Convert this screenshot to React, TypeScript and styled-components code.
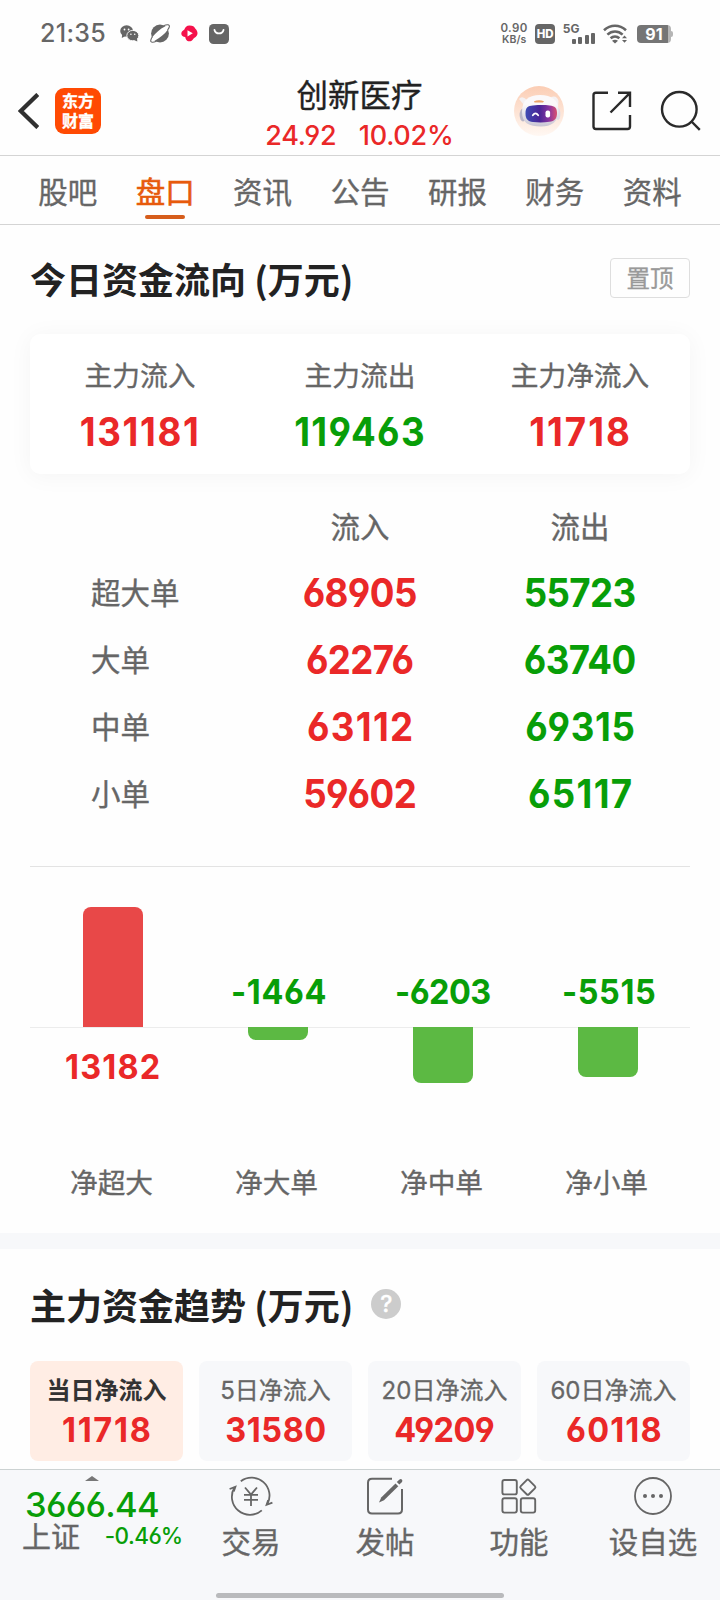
import React from "react";
import styled, { createGlobalStyle } from "styled-components";

const RED = "#ea2828";
const GREEN = "#089e08";
const GREY = "#666666";
const DARK = "#222222";

const GlobalStyle = createGlobalStyle`
  * { box-sizing: border-box; }
  html, body { margin: 0; padding: 0; background: #fff; }
  body { font-family: Inter, "Noto Sans CJK SC", sans-serif; color: ${GREY}; }
  svg { display: block; flex: none; }
`;

const Screen = styled.div`
  width: 720px;
  height: 1600px;
  overflow: hidden;
  display: flex;
  flex-direction: column;
  background: #fefefe;
  -webkit-text-stroke: 0.35px currentColor;
`;

const Num = styled.span<{ $size: number; $color?: string; $weight?: number; $ls?: number }>`
  font-family: Inter, sans-serif;
  font-feature-settings: "cv03", "cv04";
  font-size: ${(p) => p.$size}px;
  font-weight: ${(p) => p.$weight ?? 500};
  letter-spacing: ${(p) => p.$ls ?? 0}px;
  margin-right: ${(p) => -(p.$ls ?? 0)}px;
  color: ${(p) => p.$color ?? "inherit"};
  white-space: nowrap;
  -webkit-text-stroke: 0;
`;

const BoldNum = styled(Num)`
  display: inline-block;
  font-weight: 700;
  transform: scaleX(0.94);
`;
const TRACKING = [-0.016, 0.018, 0.036, 0.054, 0.045];

function Figure({ size, color, value }: { size: number; color: string; value: string | number }) {
  const text = String(value);
  const ones = text.split("1").length - 1;
  return (
    <BoldNum $size={size} $color={color} $ls={TRACKING[Math.min(ones, 4)] * size}>
      {text}
    </BoldNum>
  );
}

/* Status bar */
const StatusBar = styled.div`
  height: 66px;
  flex: none;
  display: flex;
  justify-content: space-between;
  align-items: center;
  padding: 1px 47px 0 40px;
  -webkit-text-stroke: 0;
`;
const StatusLeft = styled.div`
  display: flex;
  align-items: center;
`;
const Clock = styled.div`
  width: 80px;
  line-height: 30px;
  padding-top: 1px;
`;
const StatusIcons = styled.div`
  display: flex;
  align-items: center;
  gap: 11px;
`;
const StatusRight = styled.div`
  display: flex;
  align-items: center;
  gap: 7.6px;
`;
const NetSpeed = styled.div`
  display: flex;
  flex-direction: column;
  align-items: center;
  width: 27px;
  font-size: 10.5px;
  line-height: 11px;
  font-weight: 600;
  white-space: nowrap;
`;
const SpeedValue = styled.span`
  font-size: 11.5px;
  letter-spacing: 0.4px;
`;
const HdBadge = styled.div`
  width: 20px;
  height: 20px;
  border-radius: 4px;
  background: ${GREY};
  color: #fff;
  font-size: 11.5px;
  font-weight: 800;
  line-height: 20px;
  text-align: center;
`;
const Signal = styled.div`
  display: flex;
  flex-direction: column;
  width: 33px;
  height: 20px;
  font-size: 12px;
  font-weight: 700;
  line-height: 9px;
`;
const SignalBars = styled.div`
  display: flex;
  align-items: flex-end;
  gap: 2.4px;
  height: 11px;
  margin-left: 9px;
`;
const SignalBar = styled.i<{ $h: number }>`
  width: 4px;
  height: ${(p) => p.$h}px;
  border-radius: 1px;
  background: ${GREY};
`;
const Battery = styled.div`
  display: flex;
  align-items: center;
`;
const BatteryBody = styled.div`
  width: 34px;
  height: 18px;
  border-radius: 4px;
  background: linear-gradient(90deg, #757575 91%, #b5b5b5 91%);
  color: #fff;
  font-size: 16px;
  font-weight: 700;
  line-height: 19px;
  text-align: center;
`;
const BatteryTip = styled.i`
  width: 2px;
  height: 6px;
  border-radius: 0 2px 2px 0;
  background: #b5b5b5;
`;

/* Header */
const Header = styled.header`
  height: 90px;
  flex: none;
  display: grid;
  grid-template-columns: 1fr auto 1fr;
  padding: 0 19px 0 18px;
  border-bottom: 1px solid #d4d4d4;
`;
const HeaderLeft = styled.div`
  display: flex;
  align-items: center;
  gap: 16px;
  padding-top: 1px;
`;
const Logo = styled.div`
  width: 46px;
  height: 46px;
  border-radius: 9px;
  background: #ff4a03;
  color: #fff;
  font: 700 16px/20px Inter, "Noto Sans CJK SC", sans-serif;
  display: flex;
  flex-direction: column;
  align-items: center;
  justify-content: center;
`;
const HeaderTitle = styled.div`
  display: flex;
  flex-direction: column;
  align-items: center;
  padding-top: 9px;
`;
const StockName = styled.div`
  color: ${DARK};
  font-size: 31.5px;
  line-height: 42px;
`;
const Quote = styled.div`
  display: flex;
  gap: 22px;
  line-height: 37px;
`;
const HeaderRight = styled.div`
  display: flex;
  justify-content: flex-end;
  align-items: center;
  gap: 28px;
`;

/* Tabs */
const Tabs = styled.nav`
  height: 69px;
  flex: none;
  display: flex;
  padding: 0 19px;
  border-bottom: 1px solid #d4d4d4;
`;
const Tab = styled.div<{ $active?: boolean }>`
  flex: 1;
  display: flex;
  flex-direction: column;
  align-items: center;
  font-size: 29.5px;
  line-height: 40px;
  padding-top: 16px;
  color: ${(p) => (p.$active ? "#e75a0c" : GREY)};
  -webkit-text-stroke-width: ${(p) => (p.$active ? 0.6 : 0.35)}px;
  &::after {
    content: "";
    width: 40px;
    height: 4px;
    margin-top: 3px;
    border-radius: 2px;
    background: ${(p) => (p.$active ? "#d65d1c" : "transparent")};
  }
`;

/* Sections */
const Section = styled.section`
  padding: 0 30px;
`;
const SectionHead = styled.div<{ $h: number }>`
  height: ${(p) => p.$h}px;
  display: flex;
  align-items: center;
`;
const SectionTitle = styled.h2`
  margin: 0;
  color: ${DARK};
  font: 700 36px/48px "Noto Sans CJK SC", sans-serif;
  padding-bottom: 3px;
  -webkit-text-stroke: 0;
`;
const PinButton = styled.button`
  margin: -4px 0 0 auto;
  width: 80px;
  height: 40px;
  padding: 1px 0 0;
  border: 1px solid #dedede;
  border-radius: 4px;
  background: transparent;
  color: #999;
  font-family: inherit;
  font-size: 23.5px;
  line-height: 37px;
`;
const Summary = styled.div`
  height: 140px;
  display: grid;
  grid-template-columns: repeat(3, 1fr);
  border-radius: 10px;
  background: #fff;
  box-shadow: 0 2px 24px rgba(0, 0, 0, 0.045);
`;
const SummaryCell = styled.div`
  display: flex;
  flex-direction: column;
  align-items: center;
  padding-top: 22px;
  font-size: 27.7px;
  line-height: 40px;
`;
const SummaryValue = styled.div`
  line-height: 50px;
  margin-top: 11px;
  padding-right: 2px;
`;

const Flow = styled.div`
  padding-top: 24px;
  height: 393px;
  border-bottom: 1px solid #e3e3e3;
`;
const FlowRow = styled.div<{ $head?: boolean }>`
  display: grid;
  grid-template-columns: repeat(3, 1fr);
  align-items: center;
  text-align: center;
  height: ${(p) => (p.$head ? 58 : 67)}px;
  margin-bottom: ${(p) => (p.$head ? 3 : 0)}px;
  font-size: 29.5px;
  line-height: 40px;
`;
const RowLabel = styled.span`
  text-align: left;
  padding: 1px 0 0 61px;
`;

/* Net inflow chart */
const Chart = styled.div`
  height: 366px;
  display: grid;
  grid-template-columns: repeat(4, 1fr);
`;
const ChartColumn = styled.div`
  display: flex;
  flex-direction: column;
  align-items: center;
`;
const Half = styled.div<{ $up?: boolean }>`
  width: 100%;
  height: ${(p) => (p.$up ? 160 : 127)}px;
  display: flex;
  flex-direction: column;
  align-items: center;
  justify-content: ${(p) => (p.$up ? "flex-end" : "flex-start")};
  border-top: ${(p) => (p.$up ? "0" : "1px solid #ececec")};
`;
const Bar = styled.div<{ $up?: boolean }>`
  width: 60px;
  background: ${(p) => (p.$up ? "#e84848" : "#5cb943")};
  border-radius: ${(p) => (p.$up ? "8px 8px 0 0" : "0 0 8px 8px")};
  margin-top: ${(p) => (p.$up ? 0 : -1)}px;
  z-index: 1;
`;
const BarValue = styled.div<{ $up?: boolean }>`
  line-height: 40px;
  margin: ${(p) => (p.$up ? "19px 0 0" : "0 0 9px")};
  padding-left: ${(p) => (p.$up ? 0 : 2)}px;
`;
const ChartLabel = styled.div`
  font-size: 27.7px;
  line-height: 40px;
  padding: 9px 2px 0 0;
`;
const Divider = styled.div`
  height: 16px;
  flex: none;
  background: #f7f8fa;
`;
const HelpDot = styled.span`
  width: 30px;
  height: 30px;
  margin: -2px 0 0 18px;
  border-radius: 50%;
  background: #cccccc;
  color: #fff;
  font-size: 23px;
  font-weight: 500;
  line-height: 30px;
  text-align: center;
`;
const TrendTabs = styled.div`
  display: grid;
  grid-template-columns: repeat(4, 1fr);
  gap: 16px;
`;
const TrendTab = styled.div<{ $active?: boolean }>`
  height: 100px;
  border-radius: 8px;
  display: flex;
  flex-direction: column;
  align-items: center;
  padding-top: 13px;
  background: ${(p) => (p.$active ? "#ffede4" : "#f7f8fa")};
  color: ${(p) => (p.$active ? "#333" : GREY)};
  font-weight: ${(p) => (p.$active ? 700 : 400)};
  font-size: 24px;
  line-height: 34px;
  white-space: nowrap;
  -webkit-text-stroke-width: ${(p) => (p.$active ? 0 : 0.3)}px;
`;
const TrendValue = styled.div`
  line-height: 44px;
`;

/* Bottom bar */
const BottomBar = styled.footer`
  margin-top: auto;
  height: 131px;
  flex: none;
  border-top: 1px solid #ccd2d2;
  background: #f7f8fa;
  display: flex;
  flex-direction: column;
  justify-content: space-between;
`;
const BottomRow = styled.div`
  display: flex;
`;
const IndexBox = styled.div`
  width: 184px;
  padding: 6px 0 0 22px;
`;
const Caret = styled.i`
  display: block;
  width: 0;
  margin-left: 63px;
  border: 7px solid transparent;
  border-top: 0;
  border-bottom: 5px solid #777;
`;
const IndexValue = styled.div`
  padding: 7px 0 0 3px;
  line-height: 34px;
`;
const IndexLine = styled.div`
  display: flex;
  justify-content: space-between;
  padding-right: 1px;
  margin-top: -7px;
  font-size: 29px;
  line-height: 34px;
`;
const IndexChange = styled.div`
  margin-top: -4px;
`;
const Action = styled.div`
  width: 134px;
  display: flex;
  flex-direction: column;
  align-items: center;
  padding-top: 6px;
  font-size: 29.5px;
  line-height: 40px;
  gap: 6px;
`;
const HomeIndicator = styled.div`
  align-self: center;
  width: 288px;
  height: 5px;
  margin-bottom: 2px;
  border-radius: 3px;
  background: #b9babc;
`;

const WechatIcon = () => (
  <svg width="19" height="17" viewBox="0 0 19 17">
    <ellipse cx="6.6" cy="6" rx="6.4" ry="5.7" fill={GREY} />
    <path d="M2.2 9 L1.8 13 L5.5 11Z" fill={GREY} />
    <ellipse cx="12.8" cy="10.6" rx="6" ry="5.2" fill={GREY} stroke="#fff" strokeWidth="0.9" />
    <path d="M14 15 L17.3 16.6 L17 13Z" fill={GREY} />
    <circle cx="4.5" cy="4.5" r="0.9" fill="#fff" />
    <circle cx="8.6" cy="4.5" r="0.9" fill="#fff" />
    <circle cx="10.9" cy="9.2" r="0.8" fill="#fff" />
    <circle cx="14.7" cy="9.2" r="0.8" fill="#fff" />
  </svg>
);
const PlanetIcon = () => (
  <svg width="20" height="19" viewBox="0 0 20 19">
    <circle cx="10" cy="9.5" r="8.9" fill={GREY} />
    <ellipse cx="10" cy="9.5" rx="11" ry="3.1" transform="rotate(-40 10 9.5)" fill="#fff" />
    <path d="M13.6 1.8 C17 .2 20 .4 19.3 3 M.9 16 C0 18.8 3 18.8 6.4 17.2" fill="none" stroke={GREY} strokeWidth="1.1" />
    <path d="M19.3 3 Q18.9 4.4 17.6 6 M.9 16 Q1.1 14.6 2.4 12.8" fill="none" stroke={GREY} strokeWidth="1.1" />
  </svg>
);
const PlayIcon = () => (
  <svg width="17" height="17" viewBox="0 0 17 17">
    <path d="M8.5 .4 C12 .4 13.3 1.6 14.2 3.4 C16.4 5.6 16.8 7.6 16.4 9.3 C15.9 11.3 13.6 13 12.6 13.4 C11.2 15.6 9.4 16.8 7.2 16.2 C5.6 15.8 4.6 14 4.2 12 C2.2 11.8 .2 10.6 .3 8.4 C.4 6.6 2.3 5.4 3.4 4.6 C4 2.2 5.6 .4 8.5 .4Z" fill="#f5114b" />
    <path d="M6.5 5.2 L11.8 8.2 L6.5 11.6Z" fill="#fff" />
  </svg>
);
const BagIcon = () => (
  <svg width="20" height="20" viewBox="0 0 20 20">
    <rect width="20" height="20" rx="4.5" fill={GREY} />
    <path d="M5.5 6 C6.5 10.6 13.5 10.6 14.5 6" fill="none" stroke="#fff" strokeWidth="1.8" strokeLinecap="round" />
  </svg>
);
const WifiIcon = () => (
  <svg width="26" height="20" viewBox="0 0 26 20">
    <g fill="none" stroke={GREY} strokeWidth="2.6">
      <path d="M1 6.2 C7.5 .2 16.5 .2 23 6.2" />
      <path d="M4.4 10.6 C9 6.4 15 6.4 19.6 10.6" />
      <path d="M7.6 14.3 C10.2 12 13.8 12 16.4 14.3" />
    </g>
    <path d="M9 16.8 Q12 14.8 15 16.8 L12 19.6Z" fill={GREY} />
    <path d="M19 14.2 L21.5 11.5 L24 14.2Z M19 16 L21.5 18.8 L24 16Z" fill={GREY} />
  </svg>
);
const BackIcon = () => (
  <svg width="21" height="36" viewBox="0 0 21 36">
    <path d="M19.8 1.4 L2.8 18 L19.8 34.6" fill="none" stroke="#303030" strokeWidth="4.2" />
  </svg>
);
const RobotIcon = () => (
  <svg width="50" height="50" viewBox="0 0 50 50">
    <defs>
      <linearGradient id="halo" x1="0" y1="0" x2="0" y2="1">
        <stop offset="0" stopColor="#fbcdb4" />
        <stop offset="1" stopColor="#fff8f3" />
      </linearGradient>
      <linearGradient id="visor" x1="0" y1="0" x2="1" y2="0">
        <stop offset="0" stopColor="#3d4cb4" />
        <stop offset="0.45" stopColor="#4a2596" />
        <stop offset="0.75" stopColor="#8a35a0" />
        <stop offset="1" stopColor="#d8506f" />
      </linearGradient>
      <linearGradient id="shell" x1="0" y1="0" x2="0" y2="1">
        <stop offset="0.3" stopColor="#fbf9fa" />
        <stop offset="1" stopColor="#c9c6d4" />
      </linearGradient>
    </defs>
    <circle cx="25" cy="25" r="25" fill="url(#halo)" />
    <path d="M5 13 Q8 9 13 14 L10 19Z M37 11 Q43 9 44.5 15 L44 21Z" fill="#f5f1f2" />
    <ellipse cx="9" cy="29" rx="3.4" ry="6.5" fill="#b9b6c6" />
    <ellipse cx="44" cy="28" rx="2.4" ry="6" fill="#dedbe4" />
    <path d="M8 26 C8 14 15 9 26 9 C38 9 44.5 14 44.5 25 C44.5 36 37 40.5 27 40.5 C15 40.5 8 37 8 26Z" fill="url(#shell)" />
    <path d="M20 15.2 Q25 13.2 30 15.2 L29 16.6 H20.5Z" fill="#eca46b" />
    <path d="M11.5 27.5 C11.5 21.5 14 20 19 19.6 C25 19 30 19 35.5 19.4 C41 19.8 43 22 43 27 C43 33 40.5 35 35.5 35.8 C30 36.7 24 36.7 19 36 C13.8 35.3 11.5 33 11.5 27.5Z" fill="url(#visor)" />
    <path d="M18.8 29.2 Q21.5 25.4 24.2 29.2" fill="none" stroke="#fff" strokeWidth="1.8" strokeLinecap="round" />
    <rect x="31.5" y="24.5" width="4.6" height="7" rx="2" fill="#fff" />
  </svg>
);
const ShareIcon = () => (
  <svg width="40" height="40" viewBox="0 0 40 40" fill="none" stroke="#2a2a2a" strokeWidth="2.4">
    <path d="M16 1.8 H4 Q1.5 1.8 1.5 4.3 V35.5 Q1.5 38 4 38 H35.5 Q38 38 38 35.5 V24" />
    <path d="M26 1.8 H38 V16 M38 1.8 L18.5 21.5" />
  </svg>
);
const SearchIcon = () => (
  <svg width="41" height="41" viewBox="0 0 41 41" fill="none" stroke="#2a2a2a" strokeWidth="2.4">
    <circle cx="19.3" cy="19.3" r="17.3" />
    <path d="M31 31 L39.8 39.8" />
  </svg>
);
const TradeIcon = () => (
  <svg width="44" height="40" viewBox="0 0 44 40" fill="none" stroke={GREY} strokeWidth="1.8">
    <path d="M11.8 5.2 A18 18 0 0 1 38.2 28.5" />
    <path d="M32.8 34.3 A18 18 0 0 1 5.6 11.3" />
    <path d="M.6 13 L6.4 10.8 L4.8 15.5" />
    <path d="M43.4 26.6 L37.6 28.8 L39.2 24.1" />
    <path d="M16 11.5 L22 18.5 L28 11.5 M22 18.5 V30 M15 18.8 H29 M15 23.8 H29" />
  </svg>
);
const PostIcon = () => (
  <svg width="40" height="40" viewBox="0 0 40 40" fill="none" stroke={GREY} strokeWidth="2">
    <path d="M27 2.8 H7 Q3 2.8 3 6.8 V33.5 Q3 37.5 7 37.5 H33 Q37 37.5 37 33.5 V13" />
    <path d="M14 26.6 L16.2 21.5 L30.5 7.4 L33.3 10.2 L19 24.2Z" fill={GREY} stroke="none" />
    <path d="M31.8 6 L34.5 3.4 Q36 2.4 37 3.7 Q38 5 36.8 6.2 L34.4 8.6Z" fill={GREY} stroke="none" />
  </svg>
);
const FunctionIcon = () => (
  <svg width="40" height="40" viewBox="0 0 40 40" fill="none" stroke={GREY} strokeWidth="1.9">
    <rect x="3.4" y="4" width="14.4" height="14.4" rx="2" />
    <rect x="3.4" y="22.2" width="14.4" height="14.4" rx="2" />
    <rect x="21.8" y="22.2" width="14.4" height="14.4" rx="2" />
    <rect x="23" y="5.4" width="11.6" height="11.6" rx="1.6" transform="rotate(45 28.8 11.2)" />
  </svg>
);
const MoreIcon = () => (
  <svg width="40" height="40" viewBox="0 0 40 40">
    <circle cx="20" cy="20" r="18" fill="none" stroke={GREY} strokeWidth="1.8" />
    <g fill={GREY}>
      <circle cx="12" cy="20" r="2" />
      <circle cx="20" cy="20" r="2" />
      <circle cx="28" cy="20" r="2" />
    </g>
  </svg>
);

const tabs = ["股吧", "盘口", "资讯", "公告", "研报", "财务", "资料"];
const summary = [
  { label: "主力流入", value: "131181", color: RED },
  { label: "主力流出", value: "119463", color: GREEN },
  { label: "主力净流入", value: "11718", color: RED },
];
const orders = [
  { label: "超大单", inflow: "68905", outflow: "55723" },
  { label: "大单", inflow: "62276", outflow: "63740" },
  { label: "中单", inflow: "63112", outflow: "69315" },
  { label: "小单", inflow: "59602", outflow: "65117" },
];
const nets = [
  { label: "净超大", value: 13182 },
  { label: "净大单", value: -1464 },
  { label: "净中单", value: -6203 },
  { label: "净小单", value: -5515 },
];
const trends = [
  { label: "当日净流入", value: "11718" },
  { label: "5日净流入", value: "31580" },
  { label: "20日净流入", value: "49209" },
  { label: "60日净流入", value: "60118" },
];
const actions = [
  { label: "交易", icon: <TradeIcon /> },
  { label: "发帖", icon: <PostIcon /> },
  { label: "功能", icon: <FunctionIcon /> },
  { label: "设自选", icon: <MoreIcon /> },
];
const barHeight = (value: number) => Math.round((Math.abs(value) / 13182) * 120);

export default function App() {
  return (
    <Screen>
      <GlobalStyle />
      <StatusBar>
        <StatusLeft>
          <Clock><Num $size={25} $ls={0.3}>21:35</Num></Clock>
          <StatusIcons>
            <WechatIcon />
            <PlanetIcon />
            <PlayIcon />
            <BagIcon />
          </StatusIcons>
        </StatusLeft>
        <StatusRight>
          <NetSpeed>
            <SpeedValue>0.90</SpeedValue>
            <span>KB/s</span>
          </NetSpeed>
          <HdBadge>HD</HdBadge>
          <Signal>
            5G
            <SignalBars>
              {[5, 7, 9, 11].map((h) => <SignalBar key={h} $h={h} />)}
            </SignalBars>
          </Signal>
          <WifiIcon />
          <Battery>
            <BatteryBody>91</BatteryBody>
            <BatteryTip />
          </Battery>
        </StatusRight>
      </StatusBar>

      <Header>
        <HeaderLeft>
          <BackIcon />
          <Logo>
            <span>东方</span>
            <span>财富</span>
          </Logo>
        </HeaderLeft>
        <HeaderTitle>
          <StockName>创新医疗</StockName>
          <Quote>
            <Num $size={27} $ls={-0.25} $color={RED}>24.92</Num>
            <Num $size={27} $ls={-0.25} $color={RED}>10.02%</Num>
          </Quote>
        </HeaderTitle>
        <HeaderRight>
          <RobotIcon />
          <ShareIcon />
          <SearchIcon />
        </HeaderRight>
      </Header>

      <Tabs>
        {tabs.map((t) => <Tab key={t} $active={t === "盘口"}>{t}</Tab>)}
      </Tabs>

      <Section>
        <SectionHead $h={109}>
          <SectionTitle>今日资金流向 (万元)</SectionTitle>
          <PinButton>置顶</PinButton>
        </SectionHead>
        <Summary>
          {summary.map((s) => (
            <SummaryCell key={s.label}>
              {s.label}
              <SummaryValue><Figure size={39} color={s.color} value={s.value} /></SummaryValue>
            </SummaryCell>
          ))}
        </Summary>
        <Flow>
          <FlowRow $head>
            <span />
            <span>流入</span>
            <span>流出</span>
          </FlowRow>
          {orders.map((o) => (
            <FlowRow key={o.label}>
              <RowLabel>{o.label}</RowLabel>
              <Figure size={39} color={RED} value={o.inflow} />
              <Figure size={39} color={GREEN} value={o.outflow} />
            </FlowRow>
          ))}
        </Flow>
        <Chart>
          {nets.map((n) => {
            const up = n.value > 0;
            const value = (
              <BarValue $up={up}>
                <Figure size={34.5} color={up ? RED : GREEN} value={n.value} />
              </BarValue>
            );
            const bar = <Bar $up={up} style={{ height: barHeight(n.value) }} />;
            return (
              <ChartColumn key={n.label}>
                <Half $up>{up ? bar : value}</Half>
                <Half>{up ? value : bar}</Half>
                <ChartLabel>{n.label}</ChartLabel>
              </ChartColumn>
            );
          })}
        </Chart>
      </Section>

      <Divider />

      <Section>
        <SectionHead $h={112}>
          <SectionTitle>主力资金趋势 (万元)</SectionTitle>
          <HelpDot>?</HelpDot>
        </SectionHead>
        <TrendTabs>
          {trends.map((t, i) => (
            <TrendTab key={t.label} $active={i === 0}>
              {t.label}
              <TrendValue><Figure size={34.5} color={RED} value={t.value} /></TrendValue>
            </TrendTab>
          ))}
        </TrendTabs>
      </Section>

      <BottomBar>
        <BottomRow>
          <IndexBox>
            <Caret />
            <IndexValue><Num $size={34.5} $ls={-0.7} $color={GREEN}>3666.44</Num></IndexValue>
            <IndexLine>
              上证
              <IndexChange>
                <Num $size={22.5} $ls={-0.5} $color={GREEN}>-0.46%</Num>
              </IndexChange>
            </IndexLine>
          </IndexBox>
          {actions.map((a) => (
            <Action key={a.label}>
              {a.icon}
              <span>{a.label}</span>
            </Action>
          ))}
        </BottomRow>
        <HomeIndicator />
      </BottomBar>
    </Screen>
  );
}
